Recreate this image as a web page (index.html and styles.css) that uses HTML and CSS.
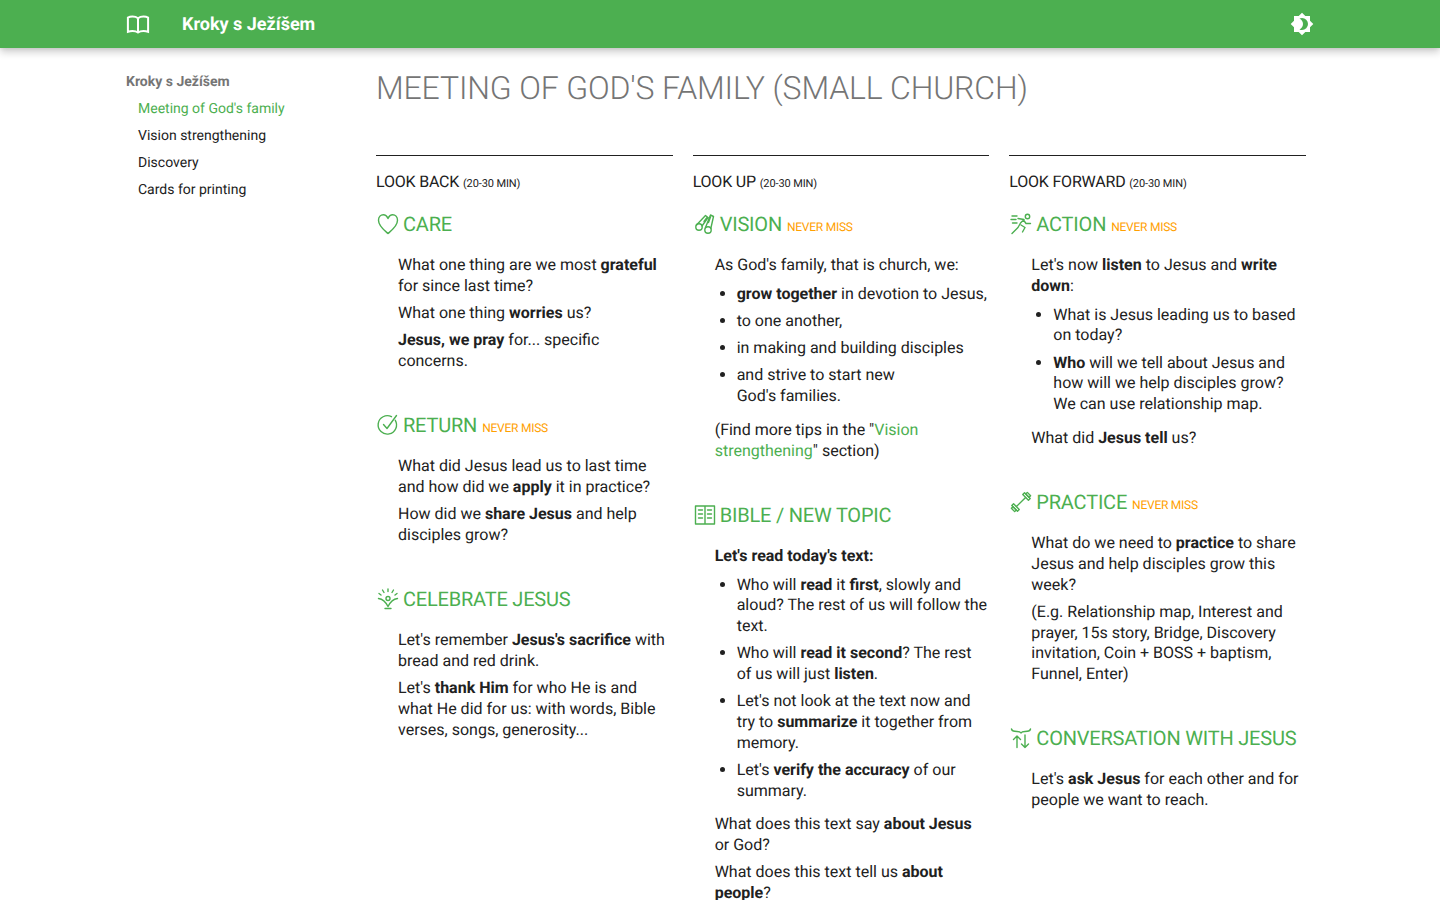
FILE: index.html
```html
<!DOCTYPE html>
<html lang="en">
<head>
    <meta charset="UTF-8">
    <meta name="viewport" content="width=device-width, initial-scale=1.0">
    <title>Kroky s Ježíšem</title>
    <link rel="stylesheet" href="styles.css">
</head>
<body>
    <header class="topbar">
        <div class="topbar-left">
            <svg class="topbar-icon" viewBox="0 0 24 24"><path class="line-white" d="M12 6.200C10.400 5 8.300 4.600 6.500 4.600C4.700 4.600 3 5 1.900 5.600V19.800C3.200 19.200 5 18.900 6.500 18.900C8.600 18.900 10.600 19.400 12 20.500C13.400 19.400 15.400 18.900 17.500 18.900C19 18.900 20.800 19.200 22.100 19.800V5.600C21 5 19.300 4.600 17.500 4.600C15.700 4.600 13.600 5 12 6.200ZM12 6.200V20.500"/></svg>
            <a class="topbar-title">Kroky s Ježíšem</a>
        </div>
        <svg class="topbar-icon" viewBox="0 0 24 24"><path fill="#fff" d="M12,18C11.11,18 10.26,17.8 9.5,17.45C11.56,16.5 13,14.42 13,12C13,9.58 11.56,7.5 9.5,6.55C10.26,6.2 11.11,6 12,6A6,6 0 0,1 18,12A6,6 0 0,1 12,18M20,8.69V4H15.31L12,0.69L8.69,4H4V8.69L0.69,12L4,15.31V20H8.69L12,23.31L15.31,20H20V15.31L23.31,12L20,8.69Z"/></svg>
    </header>

    <div class="page">
        <!-- Menu lateral -->
        <nav class="sidebar">
            <div class="sidebar-title">Kroky s Ježíšem</div>
            <a class="sidebar-link active">Meeting of God's family</a>
            <a class="sidebar-link">Vision strengthening</a>
            <a class="sidebar-link">Discovery</a>
            <a class="sidebar-link">Cards for printing</a>
        </nav>

        <main class="content">
            <h1>Meeting of God's family (small church)</h1>

            <div class="columns">
                <!-- Look back -->
                <section class="column">
                    <h2>Look back <small>(20-30 min)</small></h2>

                    <h3><svg viewBox="0 0 24 24"><path class="line" d="M12 21.500C8 18 2.500 14 2.500 8.200C2.500 5 4.700 2.700 7.300 2.700C9.300 2.700 11 4.200 12 6.500C13 4.200 14.700 2.700 16.700 2.700C19.300 2.700 21.500 5 21.500 8.200C21.500 14 16 18 12 21.500Z"/></svg>Care</h3>
                    <div class="block">
                        <p>What one thing are we most <b>grateful</b> for since last time?</p>
                        <p>What one thing <b>worries</b> us?</p>
                        <p><b>Jesus, we pray</b> for... specific concerns.</p>
                    </div>

                    <h3><svg viewBox="0 0 24 24"><path class="line" d="M19.300 7.300A9.200 9.200 0 1 1 15.500 3.700"/><path class="line" d="M7.500 11.500L11 15.500L20.500 2.500"/></svg>Return <span class="tag">never miss</span></h3>
                    <div class="block">
                        <p>What did Jesus lead us to last time and how did we <b>apply</b> it in practice?</p>
                        <p>How did we <b>share Jesus</b> and help disciples grow?</p>
                    </div>

                    <h3><svg viewBox="0 0 24 24"><circle class="line" cx="12" cy="11.500" r="2"/><path class="line" d="M2.500 11.500C6 12 9.500 14.500 12 19.500C14.500 14.500 18 12 21.500 11.500M9 21.500H15M12 2V4.500M6.500 3L8 5.500M17.500 3L16 5.500M3 6.500L5 8M21 6.500L19 8"/></svg>Celebrate Jesus</h3>
                    <div class="block">
                        <p>Let's remember <b>Jesus's sacrifice</b> with bread and red drink.</p>
                        <p>Let's <b>thank Him</b> for who He is and what He did for us: with words, Bible verses, songs, generosity...</p>
                    </div>
                </section>

                <!-- Look up -->
                <section class="column">
                    <h2>Look up <small>(20-30 min)</small></h2>

                    <h3><svg viewBox="0 0 24 24"><circle class="line" cx="6" cy="15" r="3.200"/><circle class="line" cx="15" cy="18" r="3.200"/><path class="line" d="M3.500 13L12.500 3.500L15 5.500L9 14M11 9.500L14 5.500M12.500 15.500L17.500 3L20.500 4.500L17.800 16.500M15.500 10.500L17.500 5"/></svg>Vision <span class="tag">never miss</span></h3>
                    <div class="block">
                        <p>As God's family, that is church, we:</p>
                        <ul>
                            <li><b>grow together</b> in devotion to Jesus,</li>
                            <li>to one another,</li>
                            <li>in making and building disciples</li>
                            <li>and strive to start new<br>God's families.</li>
                        </ul>
                        <p>(Find more tips in the "<a>Vision strengthening</a>" section)</p>
                    </div>

                    <h3><svg viewBox="0 0 24 24"><path class="line" d="M2.500 3H21.500V21H2.500ZM12 3V21M5.500 7H9.500M5.500 11H9.500M5.500 15H9.500M14.500 7H18.500M14.500 11H18.500M14.500 15H18.500"/></svg>Bible / new topic</h3>
                    <div class="block">
                        <p><b>Let's read today's text:</b></p>
                        <ul>
                            <li>Who will <b>read</b> it <b>first</b>, slowly and aloud? The rest of us will follow the text.</li>
                            <li>Who will <b>read it second</b>? The rest of us will just <b>listen</b>.</li>
                            <li>Let's not look at the text now and try to <b>summarize</b> it together from memory.</li>
                            <li>Let's <b>verify the accuracy</b> of our summary.</li>
                        </ul>
                        <p>What does this text say <b>about Jesus</b> or God?</p>
                        <p>What does this text tell us <b>about people</b>?</p>
                    </div>
                </section>

                <!-- Look forward -->
                <section class="column">
                    <h2>Look forward <small>(20-30 min)</small></h2>

                    <h3><svg viewBox="0 0 24 24"><circle class="line" cx="18.500" cy="4.500" r="2.200"/><path class="line" d="M3 21.500L9 15.500L11.500 11L15 7.500L9 6.500M12 13L16 15.500L13.500 20M14.500 8L17 11.500L21.500 11.500M3 4H8M2 7.500H7M3.500 11H8"/></svg>Action <span class="tag">never miss</span></h3>
                    <div class="block">
                        <p>Let's now <b>listen</b> to Jesus and <b>write down</b>:</p>
                        <ul>
                            <li>What is Jesus leading us to based on today?</li>
                            <li><b>Who</b> will we tell about Jesus and how will we help disciples grow? We can use relationship map.</li>
                        </ul>
                        <p>What did <b>Jesus tell</b> us?</p>
                    </div>

                    <h3><svg viewBox="0 0 24 24"><g transform="rotate(-45 12 12)"><path class="line" d="M5.500 12H18.500"/><rect class="line" x="0.700" y="9.700" width="2.300" height="4.600"/><rect class="line" x="3" y="8" width="2.500" height="8"/><rect class="line" x="18.500" y="8" width="2.500" height="8"/><rect class="line" x="21" y="9.700" width="2.300" height="4.600"/></g></svg>Practice <span class="tag">never miss</span></h3>
                    <div class="block">
                        <p>What do we need to <b>practice</b> to share Jesus and help disciples grow this week?</p>
                        <p>(E.g. Relationship map, Interest and prayer, 15s story, Bridge, Discovery invitation, Coin + BOSS + baptism, Funnel, Enter)</p>
                    </div>

                    <h3><svg viewBox="0 0 24 24"><path class="line" d="M2.500 3C3 5.500 5 5.500 8 5.500C10.500 5.500 11.500 6 12 7C12.500 6 13.500 5.500 16 5.500C19 5.500 21 5.500 21.500 3M8 21.500V10M4.500 13.500L8 10L11.500 13.500M16 9V21.500M12.500 18L16 21.500L19.500 18"/></svg>Conversation with Jesus</h3>
                    <div class="block">
                        <p>Let's <b>ask Jesus</b> for each other and for people we want to reach.</p>
                    </div>
                </section>
            </div>
        </main>
    </div>
</body>
</html>
```

FILE: styles.css
```css
html, body {
    height: 100%;
    overflow: hidden;
}

body {
    margin: 0;
    font-family: Roboto, "Liberation Sans", sans-serif;
    font-size: 16px;
    line-height: 20.8px;
    color: #212121;
    background-color: #fff;
    text-rendering: geometricPrecision;
}

/* Barra superior */
.topbar {
    display: flex;
    align-items: center;
    justify-content: space-between;
    height: 48px;
    padding: 0 126px;
    background-color: #4caf50;
    box-shadow: 0 0 4px rgba(0, 0, 0, 0.1), 0 4px 8px rgba(0, 0, 0, 0.2);
}

.topbar-left {
    display: flex;
    align-items: center;
}

.topbar-icon {
    width: 24px;
    height: 24px;
}

.topbar-title {
    margin: 2px 0 0 32px;
    font-size: 18px;
    font-weight: 700;
    color: #fff;
}

.line-white {
    fill: none;
    stroke: #fff;
    stroke-width: 2;
}

.line {
    fill: none;
    stroke: #4caf50;
    stroke-width: 1.4;
    stroke-linecap: round;
    stroke-linejoin: round;
}

/* Layout */
.page {
    display: flex;
    padding: 0 134px 0 126px;
}

.sidebar {
    flex: 0 0 250px;
    padding-top: 21px;
    font-size: 14px;
    line-height: 27px;
}

.sidebar-title {
    font-weight: 700;
    color: #757575;
}

.sidebar-link {
    display: block;
    padding-left: 12px;
    color: #212121;
}

.sidebar-link.active {
    color: #4caf50;
}

.content {
    flex: 1;
}

h1 {
    margin: 20px 0 47px;
    font-size: 32px;
    line-height: 40px;
    font-weight: 300;
    letter-spacing: -0.16px;
    color: #757575;
    text-transform: uppercase;
}

.columns {
    display: grid;
    grid-template-columns: repeat(3, 1fr);
    column-gap: 20px;
}

.column {
    border-top: 1px solid #212121;
}

h2 {
    margin: 15px 0 0;
    font-size: 16px;
    line-height: 21px;
    font-weight: 400;
    letter-spacing: -0.2px;
    text-transform: uppercase;
}

h2 small {
    font-size: 11px;
    letter-spacing: -0.1px;
}

h3 {
    display: flex;
    align-items: center;
    margin: 17px 0 0;
    font-size: 20px;
    line-height: 26px;
    font-weight: 400;
    letter-spacing: -0.2px;
    color: #4caf50;
    text-transform: uppercase;
}

h3 svg {
    flex: none;
    width: 24px;
    height: 24px;
    margin-right: 3px;
}

.tag {
    margin: 6px 0 0 5px;
    font-size: 12px;
    line-height: 20px;
    letter-spacing: -0.25px;
    color: #ffa000;
}

.block {
    margin: 18px 0 40.4px;
    padding-left: 22px;
}

.block a {
    color: #4caf50;
}

p {
    margin: 0 0 6.4px;
}

ul {
    margin: 8px 0 0;
    padding: 0 0 6.4px 22px;
}

li {
    margin-bottom: 6.4px;
}

b {
    font-weight: 700;
}
```
